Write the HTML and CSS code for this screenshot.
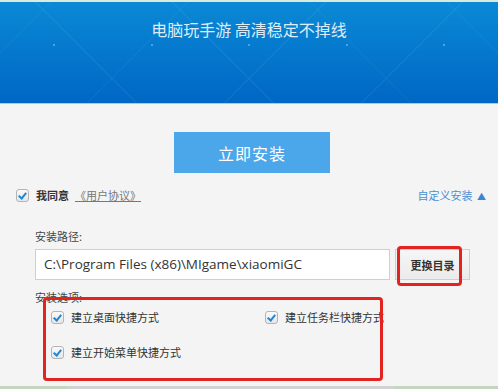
FILE: index.html
```html
<!DOCTYPE html>
<html lang="zh-CN">
<head>
    <meta charset="UTF-8">
    <title>安装</title>
    <link rel="stylesheet" href="styles.css">
</head>
<body>
    <div class="topline"></div>
    <div class="banner">
        <div class="slogan">电脑玩手游 高清稳定不掉线</div>
        <div class="dots">
            <span></span><span></span><span></span><span></span><span></span>
        </div>
    </div>

    <div class="main">
        <div class="install-row">
            <button class="install-btn">立即安装</button>
        </div>

        <div class="agree-row">
            <label class="agree">
                <span class="check"></span>
                <span class="agree-text">我同意</span>
                <a class="license">《用户协议》</a>
            </label>
            <a class="custom">自定义安装 <span class="arrow">▲</span></a>
        </div>

        <div class="section">
            <div class="caption">安装路径:</div>
            <div class="path-row">
                <div class="path-input">C:\Program Files (x86)\MIgame\xiaomiGC</div>
                <button class="browse-btn">更换目录</button>
                <div class="mark mark-browse"></div>
            </div>

            <div class="caption caption-opts">安装选项:</div>
            <div class="options">
                <label class="opt"><span class="check"></span>建立桌面快捷方式</label>
                <label class="opt"><span class="check"></span>建立任务栏快捷方式</label>
                <label class="opt"><span class="check"></span>建立开始菜单快捷方式</label>
                <div class="mark mark-opts"></div>
            </div>
        </div>
    </div>

    <div class="bottomline"><span></span></div>
</body>
</html>
```

FILE: styles.css
```css
body {
    margin: 0;
    width: 498px;
    height: 389px;
    overflow: hidden;
    background-color: #f4f4f4;
    font-family: "Noto Sans CJK SC", "Liberation Sans", sans-serif;
    font-size: 11px;
    color: #333;
    display: flex;
    flex-direction: column;
}

.topline {
    height: 2px;
    flex-shrink: 0;
    background-color: #dcebd9;
}

.banner {
    height: 101px;
    flex-shrink: 0;
    background:
        repeating-linear-gradient(45deg, transparent 0 96px, rgba(255, 255, 255, 0.05) 96px 97px),
        repeating-linear-gradient(-45deg, transparent 0 96px, rgba(255, 255, 255, 0.05) 96px 97px),
        linear-gradient(#0a89d5, #0067c5);
    border-bottom: 1px solid #9dcdf3;
    display: flex;
    flex-direction: column;
    align-items: center;
}

.slogan {
    margin-top: 15px;
    font-size: 16px;
    line-height: 24px;
    color: #dcedf9;
}

.dots {
    margin-top: 3px;
    width: 100%;
    display: flex;
    justify-content: space-between;
    padding: 0 53px;
    box-sizing: border-box;
}

.dots span {
    width: 2px;
    height: 2px;
    background-color: #4aa3e6;
}

.main {
    flex: 1;
    min-height: 0;
    padding: 0 12px 0 16px;
}

.install-row {
    display: flex;
    justify-content: center;
    padding: 28px 0 0 2px;
}

.install-btn {
    width: 156px;
    height: 41px;
    border: none;
    background-color: #4ca6ea;
    color: #fff;
    font-family: inherit;
    font-size: 16px;
    letter-spacing: 1px;
}

.agree-row {
    display: flex;
    justify-content: space-between;
    align-items: center;
    margin-top: 14px;
    height: 16px;
}

.agree {
    display: flex;
    align-items: center;
}

.check {
    width: 11px;
    height: 11px;
    border: 1px solid #b4b4b4;
    border-radius: 3px;
    background: linear-gradient(#fafafa, #e6e6e6);
    position: relative;
    margin-right: 7px;
    flex-shrink: 0;
}

.check::after {
    content: '';
    position: absolute;
    left: 3px;
    top: 1px;
    width: 3px;
    height: 6px;
    border: solid #1f86d6;
    border-width: 0 2px 2px 0;
    transform: rotate(40deg);
}

.agree-text {
    color: #333;
    font-weight: bold;
}

.license {
    margin-left: 6px;
    color: #777;
    text-decoration: underline;
}

.custom {
    color: #4a90d2;
    margin-right: 0;
}

.arrow {
    font-size: 9px;
    color: #3a86d0;
    margin-left: 2px;
}

.section {
    padding-left: 19px;
    margin-top: 25px;
}

.caption {
    color: #444;
    line-height: 16px;
}

.path-row {
    display: flex;
    position: relative;
    margin-top: 5px;
    height: 31px;
}

.path-input {
    box-sizing: border-box;
    width: 355px;
    border: 1px solid #cfcfcf;
    background-color: #fff;
    padding-left: 8px;
    line-height: 29px;
    font-family: "Open Sans", "Liberation Sans", sans-serif;
    font-size: 13.5px;
    color: #333;
}

.browse-btn {
    box-sizing: border-box;
    margin-left: 5px;
    width: 75px;
    border: 1px solid #cfcfcf;
    background: linear-gradient(#f6f6f6, #ebebeb);
    font-family: inherit;
    font-size: 11px;
    font-weight: bold;
    color: #333;
}

.mark {
    position: absolute;
    border: 3px solid #e3231f;
    border-radius: 4px;
}

.mark-browse {
    left: 362px;
    top: -3px;
    width: 59px;
    height: 34px;
}

.caption-opts {
    margin-top: 9px;
}

.options {
    position: relative;
    display: grid;
    grid-template-columns: 214px auto;
    row-gap: 19px;
    padding: 6px 0 0 16px;
    margin-top: -2px;
    height: 82px;
    align-content: start;
    box-sizing: border-box;
}

.opt {
    display: flex;
    align-items: center;
    line-height: 16px;
    color: #333;
}

.mark-opts {
    left: 8px;
    top: -6px;
    width: 334px;
    height: 78px;
}

.bottomline {
    height: 3px;
    flex-shrink: 0;
    background-color: #c4d6c0;
    display: flex;
    padding-left: 67px;
}

.bottomline span {
    width: 328px;
    background-color: #d2d2d2;
}
```
